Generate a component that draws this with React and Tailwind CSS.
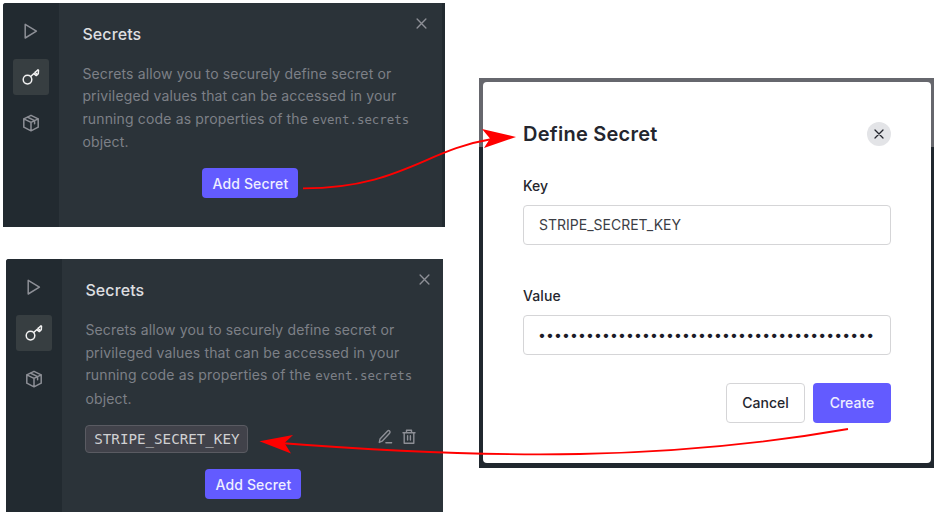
import React from "react";

const DOTS = "•".repeat(42);

function PlayIcon() {
  return (
    <svg width="14" height="18" viewBox="0 0 14 18" fill="none" stroke="#8d8f96" strokeWidth="1.5" strokeLinejoin="round">
      <path d="M1.2 2.4v13.6L12.4 9.2z" />
    </svg>
  );
}

function KeyIcon() {
  return (
    <svg width="18" height="18" viewBox="0 0 18 18" fill="none" stroke="#f1f1f1" strokeWidth="1.5" strokeLinecap="round" strokeLinejoin="round">
      <circle cx="5.5" cy="11.6" r="4.3" />
      <path d="M8.7 8.5 16 1.8M16.5 2.2l-.2 3.6-2 1.8-2.6-1.900M13 4.300l2 2" />
    </svg>
  );
}

function CubeIcon() {
  return (
    <svg width="18" height="18" viewBox="0 0 18 18" fill="none" stroke="#8d8f96" strokeWidth="1.5" strokeLinejoin="round" strokeLinecap="round">
      <path d="M9 1.3 16.2 4.8v8.4L9 16.8 1.8 13.2V4.8zM1.8 4.8 9 8.3l7.2-3.5M9 8.3v8.5M5.3 3l7.3 3.6v3.2" />
    </svg>
  );
}

function CloseIcon({ color, size = 11 }) {
  return (
    <svg width={size} height={size} viewBox="0 0 12 12" fill="none" stroke={color} strokeWidth="1.5" strokeLinecap="round">
      <path d="M1.2 1.2l9.6 9.6M10.8 1.2l-9.6 9.6" />
    </svg>
  );
}

function PenIcon() {
  return (
    <svg width="16" height="16" viewBox="0 0 16 16" fill="none" stroke="#8d8f96" strokeWidth="1.4" strokeLinejoin="round" strokeLinecap="round">
      <path d="M1.3 13.4l.7-3.300 7.600-8q1-1 2 0t0 2.100l-7.500 8zM7.900 13.800h5.700" />
    </svg>
  );
}

function TrashIcon() {
  return (
    <svg width="14" height="16" viewBox="0 0 14 16" fill="none" stroke="#8d8f96" strokeWidth="1.4" strokeLinejoin="round" strokeLinecap="round">
      <path d="M1 3.7h12M2.2 3.7v10.6h9.6V3.7M4.5 3.5V1.3h5v2.2M5.6 6.800v4.200M8.400 6.800v4.200" />
    </svg>
  );
}

function SecretsPanel({ className, secret }) {
  return (
    <section className={"flex overflow-hidden rounded-tl-[3px] bg-[#2b3339] " + className}>
      <nav className="flex w-[56px] shrink-0 flex-col items-center bg-[#222a30] pt-[10px]">
        <div className="flex h-9 w-9 items-center justify-center"><PlayIcon /></div>
        <div className="mt-[10px] flex h-9 w-9 items-center justify-center rounded-[3px] bg-[#373e41]"><KeyIcon /></div>
        <div className="mt-[10px] flex h-9 w-9 items-center justify-center"><CubeIcon /></div>
      </nav>
      <div className="min-w-0 flex-1 pl-[23px]">
        <div className={"flex h-[60px] justify-between " + (secret ? "pr-[13px]" : "pr-[15px]")}>
          <h2 className="pt-[19px] text-[16px] leading-[24px] font-medium tracking-[0.1px] text-[#dedfe0]">Secrets</h2>
          <div className="pt-[14.5px]"><CloseIcon color="#8d8f96" /></div>
        </div>
        <p className="text-[14px] leading-[22.4px] tracking-[0.15px] whitespace-nowrap text-[#7d8087]">
          Secrets allow you to securely define secret or<br />
          privileged values that can be accessed in your<br />
          running code as properties of the <code className="font-['DejaVu_Sans_Mono',monospace] text-[12.4px] tracking-normal">event.secrets</code><br />
          object.
        </p>
        {secret && (
          <div className="mt-[15px] flex h-[28px] items-center justify-between pr-[27px]">
            <code className="flex h-[28px] w-[163px] items-center justify-center rounded-[4px] border border-[#5a5b62] bg-[#41424a] pt-[1px] font-['DejaVu_Sans_Mono',monospace] text-[14.2px] text-[#d0d0d2]">{secret}</code>
            <div className="flex gap-[8px] pb-[4px]"><PenIcon /><TrashIcon /></div>
          </div>
        )}
        <button className={(secret ? "mt-[16px]" : "mt-[14.8px]") + " ml-[120px] flex h-[30px] w-[96px] items-center justify-center rounded-[4px] bg-[#635bff] text-[14px] font-medium tracking-[0.15px] text-[#eeeeff]"}>Add Secret</button>
      </div>
    </section>
  );
}

function Modal() {
  return (
    <div className="h-[390px] w-[455px] bg-[linear-gradient(#66676d_69px,#20272e_69px)] pt-[4px] pr-[3px] pl-[4px]">
      <div className="flex h-[381px] flex-col rounded-[4px] bg-white pt-[40px] pr-[40px] pl-[40px] text-[#24262e]">
        <div className="flex h-6 items-center justify-between">
          <h1 className="text-[20px] font-semibold tracking-[0.25px]">Define Secret</h1>
          <div className="flex h-6 w-6 items-center justify-center rounded-full bg-[#e3e4e7]"><CloseIcon color="#24262e" size={10} /></div>
        </div>
        <label className="mt-[30px] text-[14px] leading-[20px] font-medium">Key</label>
        <div className="mt-[9px] flex h-10 shrink-0 items-center rounded-[4px] border border-[#d5d5d7] pb-px pl-[15px] text-[14px] text-[#3c3e45]">STRIPE_SECRET_KEY</div>
        <label className="mt-[41px] text-[14px] leading-[20px] font-medium tracking-[0.1px]">Value</label>
        <div className="mt-[9px] flex h-10 shrink-0 items-center rounded-[4px] border border-[#d5d5d7] pb-[2px] pl-[14px] text-[14px] tracking-[0.13px] whitespace-nowrap text-[#1c1c28]">{DOTS}</div>
        <div className="mt-[28px] flex justify-end gap-[8px] text-[14px] font-medium">
          <button className="h-10 w-[79px] rounded-[4px] border border-[#d5d5d7] pb-px">Cancel</button>
          <button className="h-10 w-[78px] rounded-[4px] bg-[#635bff] pb-px text-[#eeeeff]">Create</button>
        </div>
      </div>
    </div>
  );
}

export default function App() {
  return (
    <main className="relative flex h-[518px] w-[941px] overflow-hidden bg-white font-['Inter',sans-serif]">
      <div className="w-[479px] shrink-0 pt-[3px]">
        <SecretsPanel className="ml-[3.4px] h-[224px] w-[442px] border-r-[3px] border-[#222a30]" />
        <SecretsPanel className="mt-[32.4px] ml-[6.4px] h-[253px] w-[437px]" secret="STRIPE_SECRET_KEY" />
      </div>
      <div className="pt-[78px]"><Modal /></div>
      <svg className="pointer-events-none absolute inset-0" width="941" height="518" fill="none">
        <path d="M303 188.4C400 188 425 150 492 139" stroke="#f00" strokeWidth="1.9" />
        <path d="M516 137l-34-8 8 9.5-6 9.5z" fill="#f00" />
        <path d="M848 429C670 460 500 460 280 443" stroke="#f00" strokeWidth="1.9" />
        <path d="M259.500 441.300l33.500-6.300-8.500 8 6.500 10.500z" fill="#f00" />
      </svg>
    </main>
  );
}
